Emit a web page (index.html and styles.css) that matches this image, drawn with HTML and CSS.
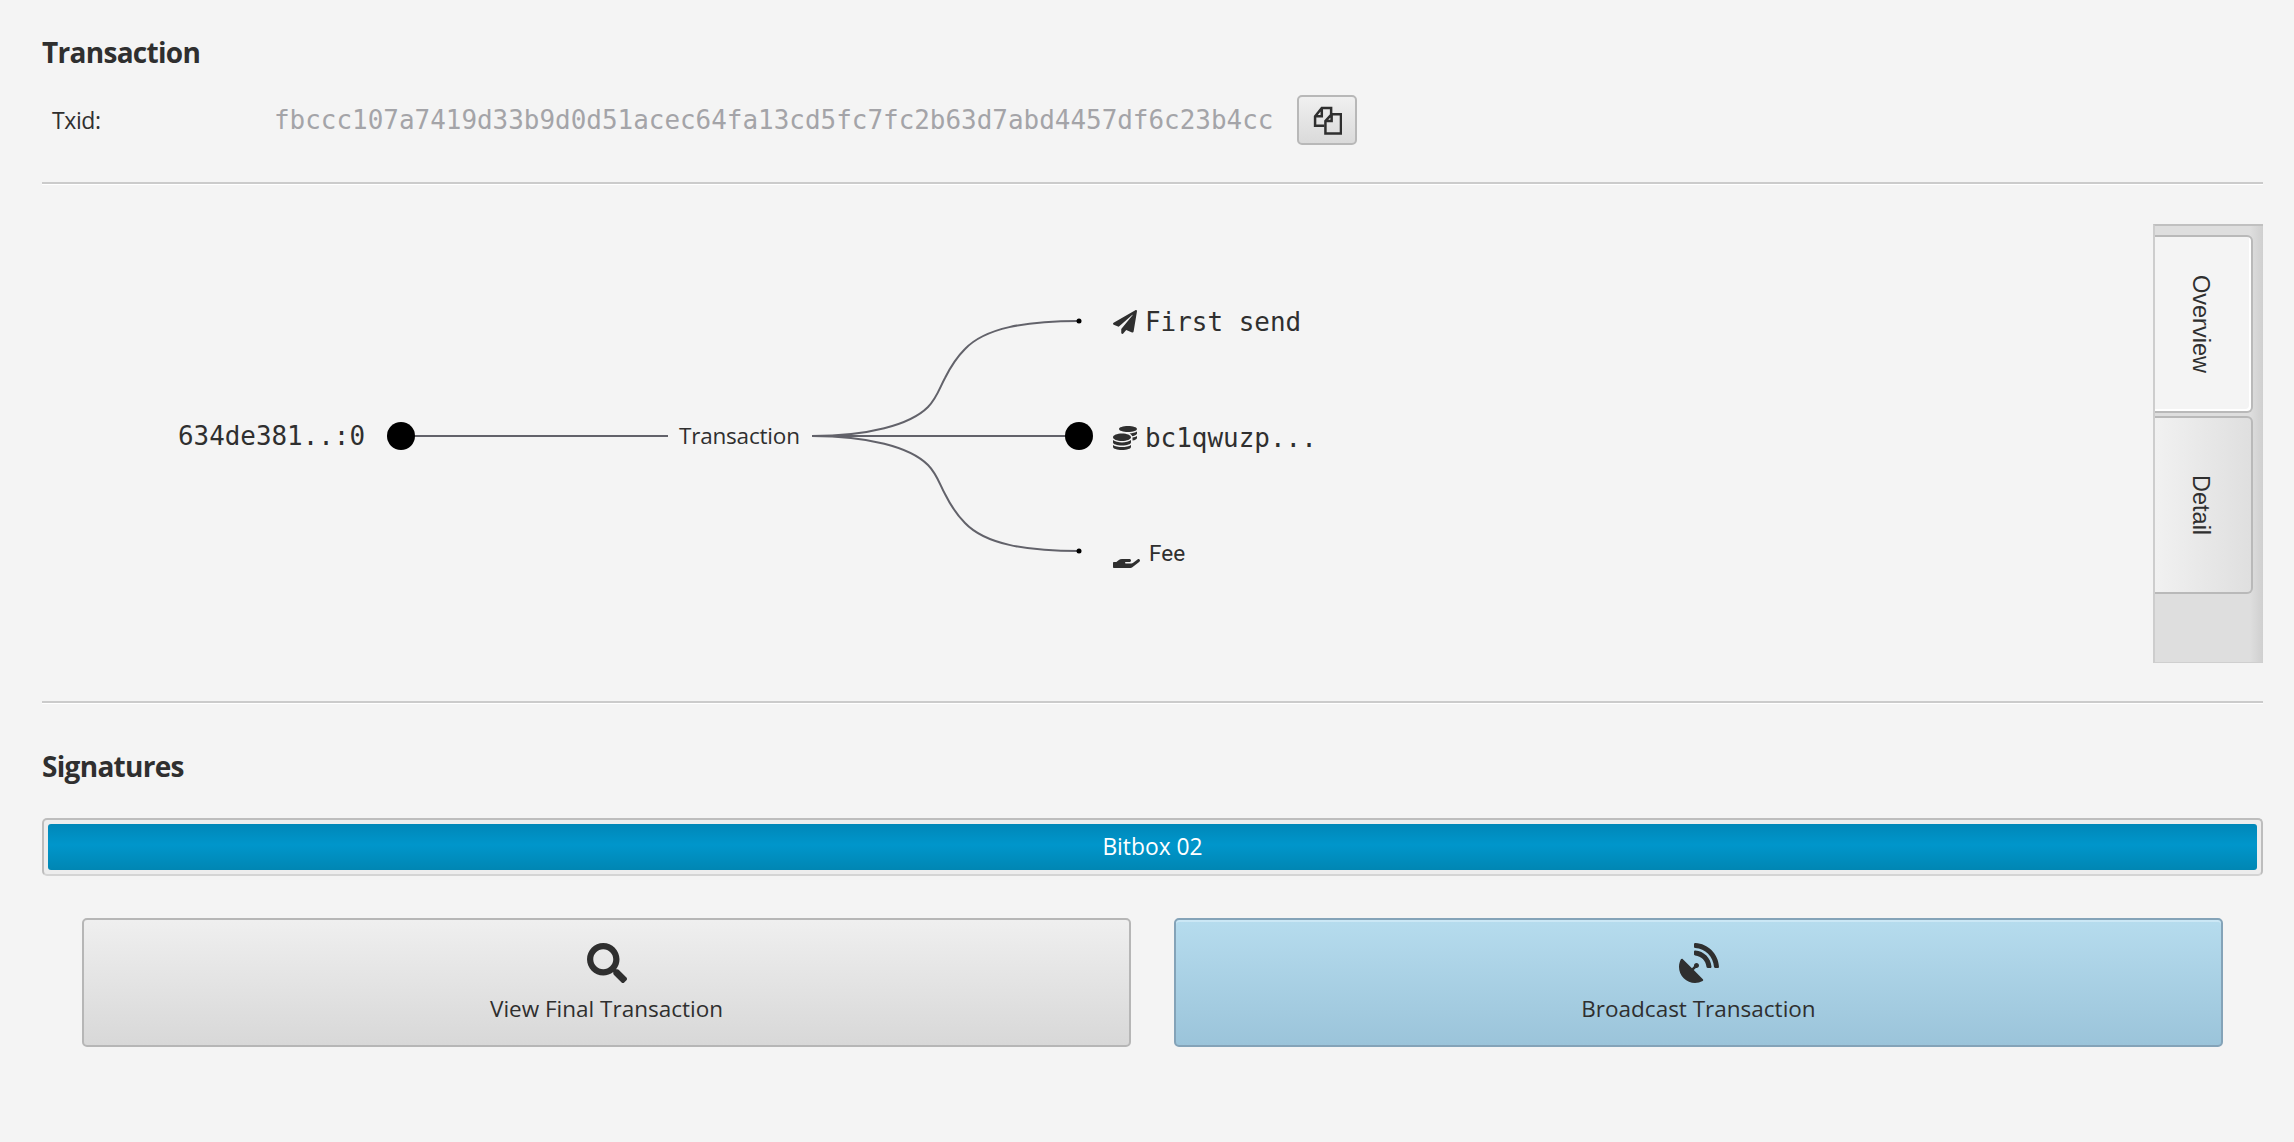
FILE: index.html
```html
<!DOCTYPE html>
<html lang="en">
<head>
    <meta charset="UTF-8">
    <title>Transaction</title>
    <link rel="stylesheet" href="styles.css">
</head>
<body>
    <main class="page">
        <h2 class="section-title">Transaction</h2>
        <div class="txid-row">
            <span class="txid-label">Txid:</span>
            <span class="txid-value">fbccc107a7419d33b9d0d51acec64fa13cd5fc7fc2b63d7abd4457df6c23b4cc</span>
            <button class="copy-btn" type="button" aria-label="Copy">
                <svg class="copy-icon" viewBox="0 0 28 28">
                    <path d="M11 19H2V10L8.500 2H17.500V8M2 10H8.500V2" />
                    <path d="M18 8H27V26.500H12V14.500ZM18 8V14.500H12" />
                </svg>
            </button>
        </div>
        <hr class="divider">

        <section class="overview">
            <div class="diagram">
                <svg class="diagram-lines" viewBox="0 0 2090 515">
                    <g class="wires">
                        <path d="M359 250H626" />
                        <path d="M770 250H1037" />
                        <path d="M770 250C826 250 868 239 886 221C895 212 898 201 903 192C909 180 914 172 923 163C943 142 983 135 1037 135" />
                        <path d="M770 250C826 250 868 261 886 279C895 288 898 299 903 308C909 320 914 328 923 337C943 358 983 365 1037 365" />
                    </g>
                    <circle cx="359" cy="250" r="14" />
                    <circle cx="1037" cy="250" r="14" />
                    <circle cx="1037" cy="135" r="2.500" />
                    <circle cx="1037" cy="365" r="2.500" />
                </svg>
                <span class="node node-input">634de381..:0</span>
                <span class="node node-tx">Transaction</span>
                <div class="node node-out node-send">
                    <svg class="out-icon" viewBox="0 0 512 512"><path d="M476 3.2L12.5 270.6c-18.1 10.4-15.8 35.6 2.2 43.2L121 358.4l287.3-253.2c5.5-4.900 13.300 2.600 8.600 8.300L176 407v80.500c0 23.600 28.500 32.900 42.500 15.800L282 426l124.600 52.200c14.200 6 30.400-2.900 33-18.200l72-432C515 7.800 493.300-6.800 476 3.200z"/></svg>
                    <span>First send</span>
                </div>
                <div class="node node-out node-change">
                    <svg class="out-icon" viewBox="0 0 512 512"><path d="M0 405.300V448c0 35.300 86 64 192 64s192-28.700 192-64v-42.700C342.700 434.400 267.200 448 192 448S41.300 434.400 0 405.300zM320 128c106 0 192-28.700 192-64S426 0 320 0 128 28.700 128 64s86 64 192 64zM0 300.400V352c0 35.300 86 64 192 64s192-28.700 192-64v-51.600c-41.300 34-116.900 51.600-192 51.600S41.300 334.400 0 300.400zm416 11c57.300-11.100 96-31.700 96-55.400v-42.700c-23.200 16.400-57.300 27.600-96 34.500v63.600zM192 160C86 160 0 195.800 0 240s86 80 192 80 192-35.800 192-80-86-80-192-80zm219.300 56.300c60-10.800 100.700-32 100.700-56.300v-42.700c-35.500 25.100-96.500 38.600-160.700 41.800 29.500 14.300 51.200 33.500 60 57.200z"/></svg>
                    <span>bc1qwuzp...</span>
                </div>
                <div class="node node-fee">
                    <svg class="fee-icon" viewBox="0 0 576 512"><path d="M565.300 328.100c-11.800-10.700-30.200-10-42.600 0L430.300 402c-11.300 9.100-25.400 14-40 14H272c-8.800 0-16-7.200-16-16s7.200-16 16-16h78.300c15.900 0 30.700-10.900 33.300-26.600 3.300-20-12.100-37.400-31.600-37.400H192c-27 0-53.100 9.300-74.100 26.300L71.400 384H16c-8.800 0-16 7.200-16 16v96c0 8.800 7.200 16 16 16h356.800c14.500 0 28.600-4.900 40-14l151.200-121c15.200-12.200 16.400-35.300 1.300-48.900z"/></svg>
                    <span>Fee</span>
                </div>
            </div>
            <div class="tab-strip">
                <div class="tab tab-active"><span>Overview</span></div>
                <div class="tab"><span>Detail</span></div>
            </div>
        </section>
        <hr class="divider">

        <h2 class="section-title signatures-title">Signatures</h2>
        <div class="progress">
            <div class="progress-bar">Bitbox 02</div>
        </div>

        <div class="actions">
            <button class="action-btn" type="button">
                <svg class="action-icon" viewBox="0 0 512 512"><path d="M505 442.700L405.300 343c-4.500-4.500-10.600-7-17-7H372c27.600-35.300 44-79.700 44-128C416 93.100 322.900 0 208 0S0 93.100 0 208s93.100 208 208 208c48.300 0 92.700-16.400 128-44v16.300c0 6.400 2.500 12.500 7 17l99.700 99.700c9.400 9.400 24.600 9.400 33.900 0l28.300-28.300c9.400-9.400 9.400-24.600.1-34zM208 336c-70.700 0-128-57.200-128-128 0-70.700 57.200-128 128-128 70.700 0 128 57.200 128 128 0 70.700-57.200 128-128 128z"/></svg>
                <span>View Final Transaction</span>
            </button>
            <button class="action-btn action-default" type="button">
                <svg class="action-icon" viewBox="0 0 512 512"><path d="M188.800 345.900l27.400-27.400c2.600.7 4.700 1.500 7.800 1.500 17.700 0 32-14.300 32-32s-14.300-32-32-32-32 14.300-32 32c0 3 .8 5.200 1.500 7.800l-27.400 27.400L49.400 206.500c-7.300-7.300-20.100-6.100-25 3-41.800 77.800-29.900 176.700 35.700 242.300 65.600 65.600 164.600 77.500 242.300 35.700 9.200-4.900 10.400-17.700 3-25L188.800 345.900zM209 0c-9.200-.5-17 6.800-17 16v31.600c0 8.500 6.600 15.500 15 15.900 129.400 7 233.100 112 240.900 241.500.5 8.400 7.500 15 15.900 15h32.100c9.200 0 16.500-7.800 16-17C503.400 139.800 372.200 8.600 209 0zm.3 96c-9.300-.7-17.300 6.700-17.300 16.100v32.100c0 8.400 6.500 15.300 14.800 15.900 76.800 6.300 138 68.200 144.900 145.200.8 8.300 7.600 14.700 15.900 14.700h32.200c9.300 0 16.800-8 16.100-17.300-8.400-110.100-96.500-198.200-206.600-206.700z"/></svg>
                <span>Broadcast Transaction</span>
            </button>
        </div>
    </main>
</body>
</html>
```

FILE: styles.css
```css
body {
    margin: 0;
    background-color: #f4f4f4;
    color: #2f2f2f;
    font-family: "Open Sans", "Noto Sans", sans-serif;
    overflow: hidden;
}

.page {
    height: 1142px;
    box-sizing: border-box;
    padding: 33px 31px 0 42px;
}

.section-title {
    margin: 0;
    font-size: 28px;
    line-height: 38px;
    font-weight: 700;
    letter-spacing: -0.7px;
}

/* Txid row */
.txid-row {
    display: flex;
    align-items: center;
    height: 50px;
    margin-top: 24px;
}

.txid-label {
    width: 222px;
    padding-left: 10px;
    font-size: 23px;
    letter-spacing: -0.4px;
}

.txid-value {
    width: 1023px;
    font-family: "DejaVu Sans Mono", "Liberation Mono", monospace;
    font-size: 25.950px;
    color: #a4a4a8;
    white-space: nowrap;
}

.copy-btn {
    display: flex;
    align-items: center;
    justify-content: center;
    width: 60px;
    height: 50px;
    padding: 0;
    border: 2px solid #b8b8b8;
    border-radius: 5px;
    background: linear-gradient(#f0f0f0, #dadada);
}

.copy-icon {
    width: 29px;
    height: 29px;
    fill: none;
    stroke: #2f2f2f;
    stroke-width: 2.400;
}

.divider {
    height: 2px;
    margin: 37px 0 0;
    border: 0;
    background-color: #cbcbcb;
    box-shadow: 0 1px 0 #fff;
}

/* Diagram and side tabs */
.overview {
    display: flex;
    justify-content: space-between;
    height: 518px;
    margin-bottom: -38px;
}

.diagram {
    position: relative;
    flex: 1;
    margin-top: 2px;
}

.diagram-lines {
    position: absolute;
    top: 0;
    left: 0;
    width: 2090px;
    height: 515px;
}

.wires path {
    fill: none;
    stroke: #62626a;
    stroke-width: 2;
}

.node {
    position: absolute;
    display: flex;
    align-items: center;
    white-space: nowrap;
}

.node-input {
    top: 232px;
    left: 136px;
    font-family: "DejaVu Sans Mono", "Liberation Mono", monospace;
    font-size: 25.900px;
    line-height: 36px;
}

.node-tx {
    top: 233px;
    left: 637px;
    font-size: 22.500px;
    line-height: 34px;
    letter-spacing: -0.2px;
}

.node-out {
    gap: 8px;
    left: 1071px;
    font-family: "DejaVu Sans Mono", "Liberation Mono", monospace;
    font-size: 25.950px;
    line-height: 36px;
}

.node-send {
    top: 118px;
}

.node-change {
    top: 234px;
}

.node-fee {
    top: 349px;
    left: 1071px;
    gap: 9px;
    font-family: Roboto, sans-serif;
    font-size: 22.500px;
    line-height: 36px;
}

.out-icon {
    width: 24px;
    height: 24px;
    fill: #2f2f2f;
}

.fee-icon {
    width: 27px;
    height: 24px;
    margin-top: 5px;
    fill: #2f2f2f;
}

.tab-strip {
    display: flex;
    flex-direction: column;
    gap: 3px;
    align-self: flex-start;
    box-sizing: border-box;
    width: 110px;
    height: 439px;
    margin-top: 40px;
    padding-top: 9px;
    border-top: 2px solid #c0c0c0;
    border-bottom: 1px solid #cfcfcf;
    border-left: 2px solid #cdcdcd;
    background: linear-gradient(to right, #dedede 88%, #cfcfcf);
}

.tab {
    display: flex;
    align-items: center;
    justify-content: center;
    box-sizing: border-box;
    width: 98px;
    height: 178px;
    padding-right: 5px;
    border: 2px solid #b9b9b9;
    border-left: 0;
    border-radius: 0 6px 6px 0;
    background: linear-gradient(to right, #f1f1f1, #dfdfdf);
    font-family: "Liberation Sans", sans-serif;
    font-size: 23.500px;
}

.tab span {
    writing-mode: vertical-rl;
}

.tab-active {
    background: #f4f4f4;
    box-shadow: inset -2px -2px 0 #fff;
}

/* Signatures */
.signatures-title {
    margin-top: 44px;
}

.progress {
    box-sizing: border-box;
    height: 58px;
    margin-top: 33px;
    padding: 4px;
    border: 2px solid #bdbdbd;
    border-bottom-color: #d4d4d4;
    border-radius: 5px;
    background-color: #ededed;
}

.progress-bar {
    height: 46px;
    border-radius: 3px;
    background: linear-gradient(#0087b8, #0096cb 45%, #0086b3);
    color: #fff;
    font-size: 22.800px;
    line-height: 46px;
    text-align: center;
}

/* Bottom buttons */
.actions {
    display: flex;
    gap: 43px;
    margin-top: 42px;
    padding: 0 40px;
}

.action-btn {
    display: flex;
    flex: 1;
    flex-direction: column;
    align-items: center;
    box-sizing: border-box;
    height: 129px;
    padding: 23px 0 0;
    border: 2px solid #b6b6b6;
    border-radius: 5px;
    background: linear-gradient(#efefef, #d8d8d8);
    color: #2f2f2f;
    font-family: inherit;
    font-size: 22.500px;
    line-height: 32px;
}

.action-default {
    border-color: #84a3b8;
    background: linear-gradient(#b6dcee, #9bc4da);
    box-shadow: inset 0 2px 0 #cbe7f5;
}

.action-icon {
    width: 40px;
    height: 40px;
    margin-bottom: 10px;
    fill: #2f2f2f;
}
```
